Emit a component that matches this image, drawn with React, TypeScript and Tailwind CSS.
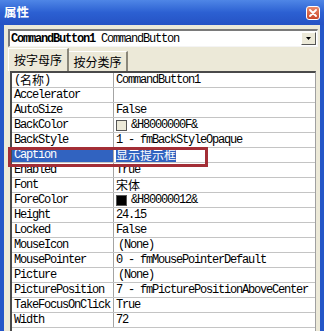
import React from "react";

const mono = "font-['Liberation_Mono',monospace] text-[12px] tracking-[-1.2px] leading-[14px]";
const cjk = "font-['Noto_Sans_CJK_SC',sans-serif] text-[12px] tracking-normal leading-[14px]";

const C = ({ children }: { children: React.ReactNode }) => <span className={cjk}>{children}</span>;

const Swatch = ({ color }: { color: string }) => (
  <span className="inline-block w-[11px] h-[11px] border border-[#555] mr-[4px]" style={{ background: color }} />
);

type Row = { name: React.ReactNode; value: React.ReactNode; selected?: boolean };

const rows: Row[] = [
  { name: <>(<C>名称</C>)</>, value: "CommandButton1" },
  { name: "Accelerator", value: "" },
  { name: "AutoSize", value: "False" },
  { name: "BackColor", value: <><Swatch color="#ece9d8" />&amp;H8000000F&amp;</> },
  { name: "BackStyle", value: "1 - fmBackStyleOpaque" },
  { name: "Caption", value: <span className={`${cjk} bg-[#3163c0] text-white`}>显示提示框</span>, selected: true },
  { name: "Enabled", value: "True" },
  { name: "Font", value: <C>宋体</C> },
  { name: "ForeColor", value: <><Swatch color="#000" />&amp;H80000012&amp;</> },
  { name: "Height", value: "24.15" },
  { name: "Locked", value: "False" },
  { name: "MouseIcon", value: <span className="ml-[2px]">(None)</span> },
  { name: "MousePointer", value: "0 - fmMousePointerDefault" },
  { name: "Picture", value: <span className="ml-[2px]">(None)</span> },
  { name: "PicturePosition", value: "7 - fmPicturePositionAboveCenter" },
  { name: "TakeFocusOnClick", value: "True" },
  { name: "Width", value: "72" },
];

export default function App() {
  return (
    <div className="relative w-[324px] h-[331px] overflow-hidden bg-[#2456c8] flex flex-col">
      {/* Title bar */}
      <div className="h-[25px] shrink-0 flex items-center justify-between pl-[4px] pr-[4px] bg-linear-to-b from-[#4f86e6] via-[#2c60d2] to-[#2552c4]">
        <span className="font-['Noto_Sans_CJK_SC',sans-serif] text-[12.5px] font-bold text-white leading-none">属性</span>
        <div className="w-[14px] h-[14px] rounded-[3px] border border-white bg-linear-to-b from-[#ea8a6a] to-[#c8452a] flex items-center justify-center">
          <svg width="8" height="8" viewBox="0 0 8 8">
            <path d="M1 1 L7 7 M7 1 L1 7" stroke="white" strokeWidth="1.8" strokeLinecap="round" />
          </svg>
        </div>
      </div>

      {/* Body */}
      <div className="flex-1 mx-[4px] bg-[#ece9d8] flex flex-col pt-[4px] pl-[4px] pr-[2px]">
        {/* Combo */}
        <div className="h-[18px] shrink-0 flex items-center bg-white border-t-2 border-l-2 border-t-[#7a7a7a] border-l-[#7a7a7a] border-b border-r border-b-[#f4f4f4] border-r-[#f4f4f4] pl-[1px] pr-[1px]">
          <span className={`${mono} font-bold tracking-[-0.2px] whitespace-pre`}>CommandButton1</span>
          <span className={`${mono} whitespace-pre`}> CommandButton</span>
          <div className="ml-auto w-[15px] h-[13px] bg-[#ece9d8] border-t border-l border-t-white border-l-white border-b border-r border-b-[#555] border-r-[#555] flex items-center justify-center">
            <svg width="5" height="3" viewBox="0 0 5 3"><path d="M0 0 H5 L2.5 3 Z" fill="#000" /></svg>
          </div>
        </div>

        {/* Tabs */}
        <div className="h-[23px] shrink-0 mt-[1px] flex items-end">
          <div className="h-[23px] w-[61px] border-t border-l border-t-white border-l-white border-r-2 border-r-[#8a877a] flex items-center justify-center">
            <span className={`${cjk} text-[12.5px]`}>按字母序</span>
          </div>
          <div className="h-[20px] w-[59px] border-t border-t-white border-r-2 border-r-[#8a877a] flex items-center justify-center">
            <span className={`${cjk} text-[12.5px]`}>按分类序</span>
          </div>
        </div>

        {/* Grid */}
        <div className="flex-1 ml-[2px] mr-[2px] bg-white border-t-2 border-l-2 border-t-[#4a4a4a] border-l-[#4a4a4a] border-r border-r-[#a0a0a0] flex flex-col">
          {rows.map((r, i) => (
            <div key={i} className="flex h-[15px] shrink-0 border-b border-[#c4c4c4]">
              <div
                className={`w-[102px] shrink-0 border-r border-[#a4a4a4] pl-[2px] flex items-center whitespace-pre ${mono} ${
                  r.selected ? "bg-[#3163c0] text-white" : "text-black"
                }`}
              >
                {r.name}
              </div>
              <div className={`flex-1 pl-[2px] flex items-center whitespace-pre text-black ${mono}`}>{r.value}</div>
            </div>
          ))}
        </div>
      </div>

      {/* Red annotation box */}
      <div className="absolute left-[8px] top-[147px] w-[200px] h-[20px] border-[3px] border-[#a32e36]" />
    </div>
  );
}
